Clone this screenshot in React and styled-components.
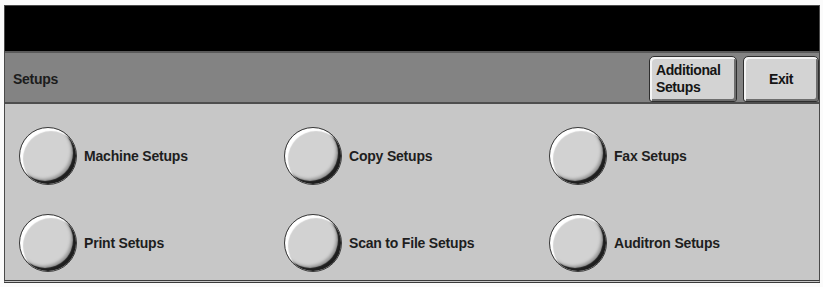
import React from "react";
import styled, { createGlobalStyle } from "styled-components";

const GlobalStyle = createGlobalStyle`
  html, body {
    margin: 0;
    padding: 0;
    background: #fbfbfb;
  }
  body {
    font-family: "Liberation Sans", Arial, sans-serif;
  }
`;

const setups = [
  "Machine Setups",
  "Copy Setups",
  "Fax Setups",
  "Print Setups",
  "Scan to File Setups",
  "Auditron Setups",
];

export default function App() {
  return (
    <>
      <GlobalStyle />
      <Screen>
        <MessageBar />
        <TitleBar>
          <Title>Setups</Title>
          <TitleButtons>
            <TabButton $align="left">
              Additional
              <br />
              Setups
            </TabButton>
            <TabButton $align="center">Exit</TabButton>
          </TitleButtons>
        </TitleBar>
        <Panel>
          {setups.map((label) => (
            <Option key={label}>
              <RoundButton />
              <OptionLabel>{label}</OptionLabel>
            </Option>
          ))}
        </Panel>
      </Screen>
    </>
  );
}

const Screen = styled.div`
  margin: 5px 0 0 4px;
  width: 816px;
  height: 278px;
  box-sizing: border-box;
  display: flex;
  flex-direction: column;
  border: 1px solid #4a4a4a;
  border-bottom: 3px double #3a3a3a;
  background: #c7c7c7;
`;

const MessageBar = styled.div`
  height: 45px;
  background: #000;
  border-bottom: 2px solid #5a5a5a;
`;

const TitleBar = styled.div`
  height: 49px;
  display: flex;
  align-items: center;
  justify-content: space-between;
  background: #838383;
  border-bottom: 2px solid #4e4e4e;
  padding-left: 8px;
`;

const Title = styled.div`
  font-size: 14px;
  font-weight: bold;
  color: #1c1c1c;
  letter-spacing: -0.3px;
  margin-top: 2px;
`;

const TitleButtons = styled.div`
  display: flex;
  align-self: flex-end;
  gap: 6px;
  padding-right: 0;
`;

const TabButton = styled.div`
  box-sizing: border-box;
  width: ${(p) => (p.$align === "left" ? "88px" : "76px")};
  height: 46px;
  display: flex;
  flex-direction: column;
  justify-content: center;
  align-items: ${(p) => (p.$align === "left" ? "flex-start" : "center")};
  padding-left: ${(p) => (p.$align === "left" ? "6px" : "0")};
  font-size: 14px;
  font-weight: bold;
  line-height: 17px;
  letter-spacing: -0.4px;
  color: #151515;
  background: #d3d3d3;
  border: 1px solid #2e2e2e;
  border-radius: 5px 5px 3px 3px;
  box-shadow: inset 2px 2px 0 #f4f4f4, inset -2px -2px 0 #6e6e6e;
`;

const Panel = styled.div`
  flex: 1;
  display: grid;
  grid-template-columns: repeat(3, 265px);
  grid-auto-rows: 58px;
  row-gap: 29px;
  padding: 23px 0 0 14px;
`;

const Option = styled.div`
  display: flex;
  align-items: center;
  gap: 7px;
`;

const RoundButton = styled.div`
  width: 58px;
  height: 58px;
  box-sizing: border-box;
  border-radius: 50%;
  background: #d2d2d2;
  border: 1px solid #3a3a3a;
  box-shadow: inset 3px 3px 1px #ffffff, inset -3px -3px 1px #1e1e1e,
    inset -5px -5px 3px #9a9a9a;
`;

const OptionLabel = styled.div`
  font-size: 14px;
  font-weight: bold;
  color: #1e1e1e;
  letter-spacing: -0.2px;
`;
